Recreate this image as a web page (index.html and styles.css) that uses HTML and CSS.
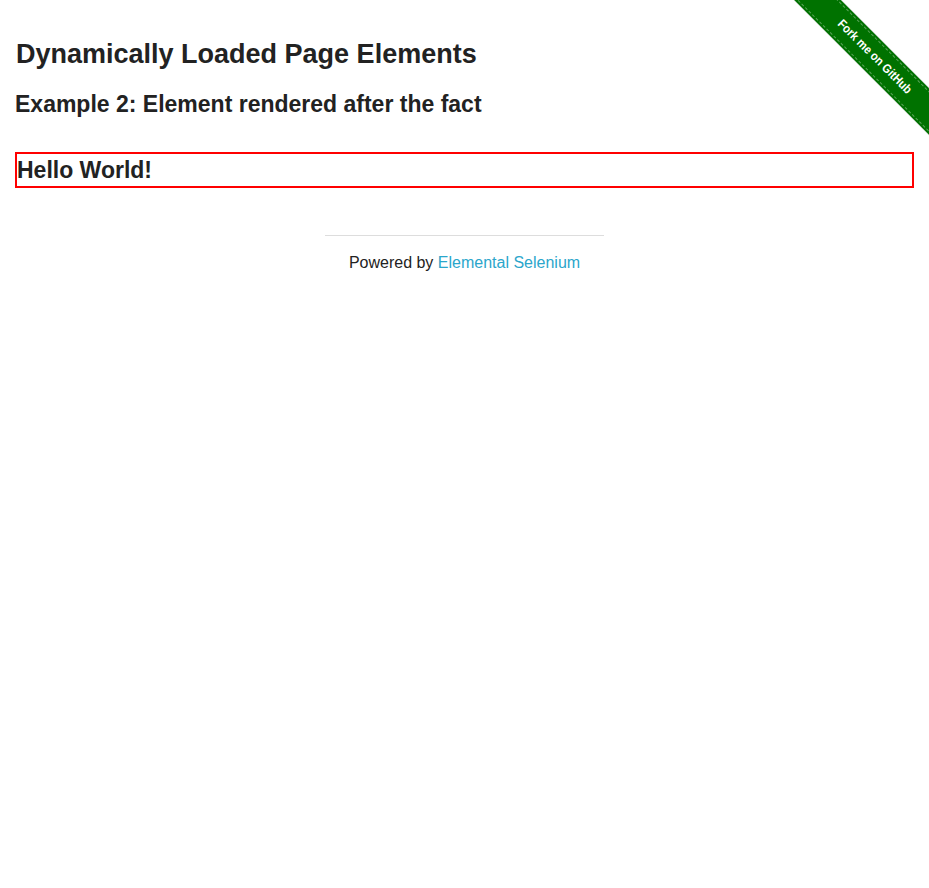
FILE: index.html
```html
<!DOCTYPE html>
<html lang="en">
<head>
<meta charset="utf-8">
<title>The Internet</title>
<link rel="stylesheet" href="styles.css">
</head>
<body>
<div class="ribbon-wrap">
  <a class="ribbon" href="#"><span class="ribbon-text">Fork me on GitHub</span></a>
</div>
<div class="page">
  <div class="example">
    <h3 class="title">Dynamically Loaded Page Elements</h3>
    <h4 class="subtitle">Example 2: Element rendered after the fact</h4>
    <div class="finish">
      <h4 class="finish-text">Hello World!</h4>
    </div>
  </div>
  <div class="footer">
    <hr class="footer-rule">
    <div class="footer-text">Powered by <a class="footer-link" href="#">Elemental Selenium</a></div>
  </div>
</div>
</body>
</html>
```
FILE: styles.css
```css
html, body {
  margin: 0;
  padding: 0;
  background: #fff;
}
body {
  font-family: "Liberation Sans", Arial, sans-serif;
  color: #222;
  position: relative;
}
.page {
  padding: 38px 15px 0;
}
.title {
  margin: 0 0 20px;
  padding-left: 1px;
  font-size: 27px;
  line-height: 32px;
  font-weight: bold;
  color: #222;
}
.subtitle {
  margin: 0 0 33px;
  font-size: 23px;
  line-height: 29px;
  font-weight: bold;
  color: #222;
}
.finish {
  border: 2px solid #f00;
}
.finish-text {
  margin: 0;
  padding: 2px 0 1px;
  font-size: 23px;
  line-height: 29px;
  font-weight: bold;
  color: #222;
}
.footer {
  width: calc(33.3333% - 20px);
  margin: 47px auto 0;
  text-align: center;
}
.footer-rule {
  border: 0;
  border-top: 1px solid #ddd;
  margin: 0 0 17px;
  height: 0;
}
.footer-text {
  font-size: 16px;
  line-height: 20px;
}
.footer-link {
  color: #2ba6cb;
  text-decoration: none;
}
.ribbon-wrap {
  position: absolute;
  top: 0;
  right: 0;
  width: 149px;
  height: 149px;
  overflow: hidden;
}
.ribbon {
  position: absolute;
  left: -25px;
  top: 41px;
  width: 238px;
  height: 33px;
  padding-right: 2px;
  background: #007200;
  color: #fff;
  font-size: 12.5px;
  font-weight: bold;
  line-height: 33px;
  text-align: center;
  text-decoration: none;
  transform: rotate(45deg);
  box-shadow: 0 0 1px rgba(0,0,0,0.3);
}
.ribbon-text {
  display: inline-block;
  transform: scaleX(0.88);
}
.ribbon::before {
  content: "";
  position: absolute;
  left: 0;
  right: 0;
  top: 2px;
  bottom: 2px;
  border-top: 1px dashed rgba(255,255,255,0.35);
  border-bottom: 1px dashed rgba(255,255,255,0.35);
}
```
